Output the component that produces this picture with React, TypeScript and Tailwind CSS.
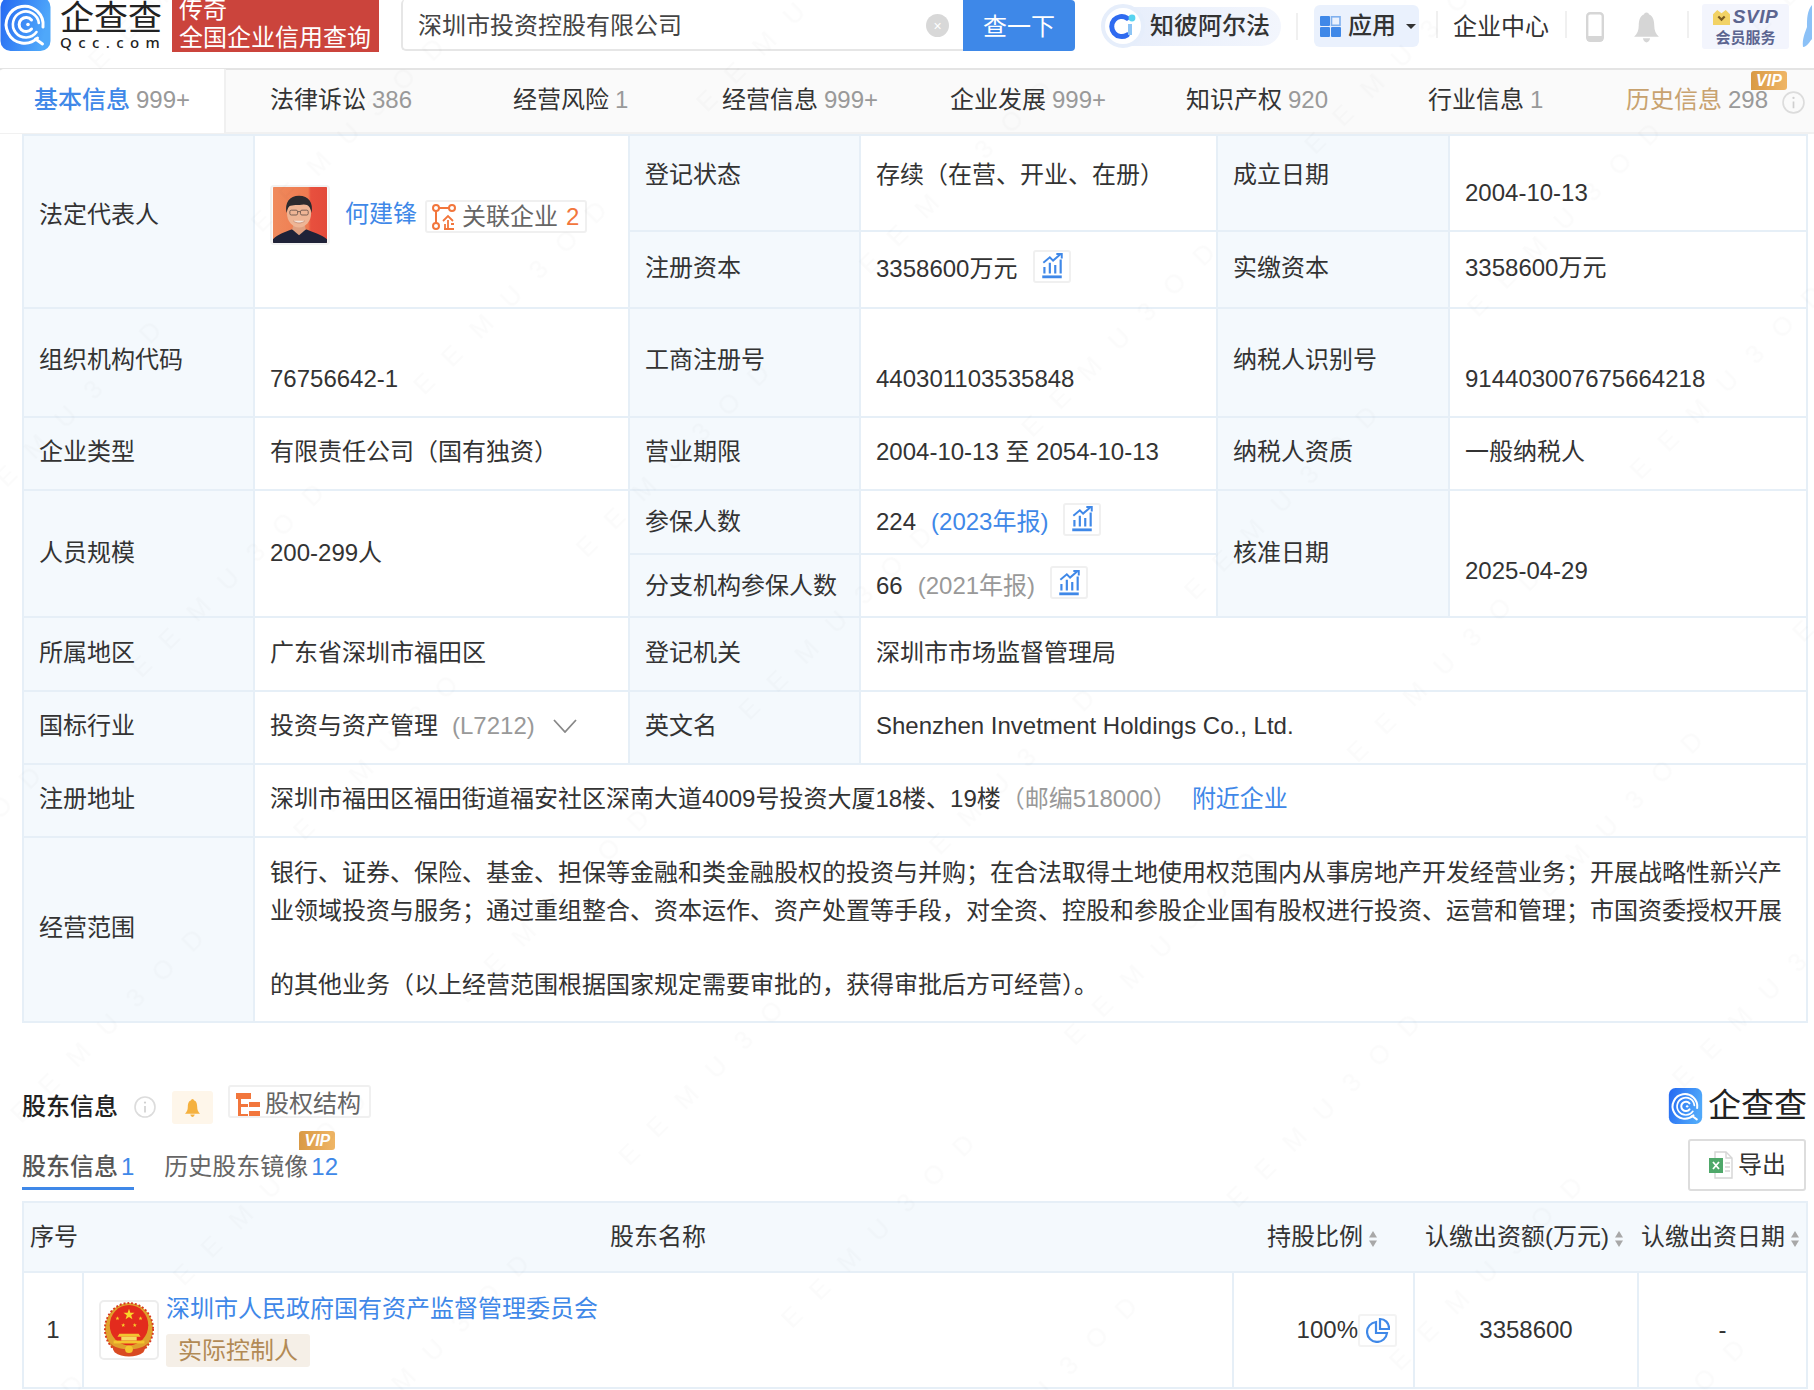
import React from "react";

const Logo = ({ className }: { className: string }) => (
  <svg viewBox="0 0 50 54" className={className}>
    <defs>
      <linearGradient id="lg" x1="0" y1="0" x2="1" y2="0.3">
        <stop offset="0" stopColor="#2468f2" />
        <stop offset="1" stopColor="#4fa8fa" />
      </linearGradient>
    </defs>
    <rect x="0" y="0" width="50" height="54" rx="10" fill="url(#lg)" />
    <path d="M37 41A18.5 18.5 0 1 1 42.5 30" fill="none" stroke="#fff" strokeWidth="3" strokeLinecap="round" />
    <path d="M35 42L42 47" fill="none" stroke="#fff" strokeWidth="3" strokeLinecap="round" />
    <path d="M36 35A13 13 0 1 1 38.3 26" fill="none" stroke="#fff" strokeWidth="2.6" strokeLinecap="round" />
    <path d="M31 23A7 7 0 1 0 31 32" fill="none" stroke="#fff" strokeWidth="3" strokeLinecap="round" />
    <circle cx="27.5" cy="27.5" r="1.8" fill="#fff" />
  </svg>
);

const Chart = ({ color = "#3f88e8" }: { color?: string }) => (
  <svg viewBox="0 0 24 24" className="w-[26px] h-[26px]" fill="none" stroke={color} strokeWidth="2">
    <path d="M3 22H21" strokeWidth="2.6" />
    <path d="M5 19V13M10 19V9M15 19V11M20 19V6" />
    <path d="M4 9L10 4L13 7L20 1" strokeWidth="1.8" />
    <path d="M16 1H21V5" strokeWidth="1.8" />
  </svg>
);

const ChartBtn = ({ className }: { className: string }) => (
  <span className={"inline-flex w-[38px] h-[33px] items-center justify-center rounded-[3px] border-2 border-[#f0f0f0] align-middle " + className}>
    <Chart />
  </span>
);

const Vip = ({ className }: { className: string }) => (
  <span className={"absolute w-[36px] h-[19px] flex items-center justify-center rounded-[3px] rounded-bl-none bg-gradient-to-r from-[#d99a45] to-[#efb565] text-white text-[16px] font-bold italic leading-none " + className}>
    VIP
  </span>
);

const Info = ({ className }: { className: string }) => (
  <svg viewBox="0 0 22 22" className={className} fill="none">
    <circle cx="11" cy="11" r="10" stroke="#dcdcdc" strokeWidth="1.6" />
    <circle cx="11" cy="6.6" r="1.1" fill="#cfcfcf" />
    <path d="M11 10V16.5" stroke="#cfcfcf" strokeWidth="1.6" />
  </svg>
);

const Bell = ({ className, color }: { className: string; color: string }) => (
  <svg viewBox="0 0 24 30" className={className} fill={color}>
    <circle cx="12" cy="3" r="2.4" />
    <path d="M12 2C18 2 19.5 8 19.5 13C19.5 18 21 21 24 24H0C3 21 4.5 18 4.5 13C4.5 8 6 2 12 2Z" />
    <path d="M8.5 25.5H15.5C15 28 13.5 29.5 12 29.5C10.5 29.5 9 28 8.5 25.5Z" />
  </svg>
);

const Sort = () => (
  <svg viewBox="0 0 8 16" className="w-[8px] h-[16px] ml-[6px] inline-block" fill="#a8a8a8">
    <path d="M4 0L8 6.5H0Z" />
    <path d="M4 16L8 9.5H0Z" />
  </svg>
);

const Avatar = () => (
  <span className="inline-flex w-[60px] h-[60px] rounded-[4px] border-2 border-[#f2f2f2] overflow-hidden shrink-0">
    <svg viewBox="0 0 56 58" className="w-full h-full">
      <defs>
        <linearGradient id="av" x1="0" y1="0" x2="1" y2="0">
          <stop offset="0" stopColor="#f08a5c" />
          <stop offset="0.65" stopColor="#ee7a50" />
          <stop offset="0.7" stopColor="#e8503e" />
          <stop offset="1" stopColor="#e34a3a" />
        </linearGradient>
      </defs>
      <rect width="56" height="58" fill="url(#av)" />
      <path d="M0 58V54C5 49 12 47 19 44H35C41 47 50 49 56 54V58Z" fill="#1f2238" />
      <path d="M20 44L27 50L34 44L32 36H22Z" fill="#dfa080" />
      <ellipse cx="27" cy="27" rx="12.5" ry="15" fill="#eeb595" />
      <path d="M14 27C12 16 17 9 27 9C37 9 42 16 40 27C39 21 37 18 32 18C26 19 20 18 17 20C15 22 15 24 14 27Z" fill="#2b2a2e" />
      <rect x="17.5" y="24" width="8" height="5" rx="1.5" fill="none" stroke="#5a4a44" strokeWidth="0.8" />
      <rect x="28.5" y="24" width="8" height="5" rx="1.5" fill="none" stroke="#5a4a44" strokeWidth="0.8" />
      <path d="M25.5 25.5H28.5" stroke="#5a4a44" strokeWidth="0.8" />
      <path d="M21 35C24 38 30 38 33 35" fill="#f5e6dc" stroke="#b0705a" strokeWidth="0.6" />
    </svg>
  </span>
);

const star = (cx: number, cy: number, r: number) => {
  const pts: string[] = [];
  for (let i = 0; i < 10; i++) {
    const rad = i % 2 === 0 ? r : r * 0.4;
    const a = (Math.PI / 5) * i - Math.PI / 2;
    pts.push(`${(cx + rad * Math.cos(a)).toFixed(2)},${(cy + rad * Math.sin(a)).toFixed(2)}`);
  }
  return pts.join(" ");
};

const Emblem = () => (
  <span className="inline-flex w-[60px] h-[60px] rounded-[5px] border-2 border-[#ededed] items-center justify-center shrink-0">
    <svg viewBox="0 0 54 58" className="w-[52px] h-[56px]">
      <ellipse cx="27" cy="28" rx="25" ry="27" fill="#e0a12c" />
      <ellipse cx="27" cy="28" rx="25" ry="27" fill="none" stroke="#d83a22" strokeWidth="2" strokeDasharray="2 2" />
      <ellipse cx="27" cy="24" rx="20" ry="21" fill="#e32b1d" />
      <polygon points={star(27, 13, 6)} fill="#f8d72a" />
      <polygon points={star(15, 17, 2.2)} fill="#f8d72a" />
      <polygon points={star(21, 24, 2.2)} fill="#f8d72a" />
      <polygon points={star(33, 24, 2.2)} fill="#f8d72a" />
      <polygon points={star(39, 17, 2.2)} fill="#f8d72a" />
      <path d="M17 33H37L39 36H15Z" fill="#f3c52f" />
      <rect x="19" y="36" width="16" height="4" fill="#f6d860" />
      <rect x="11" y="40" width="32" height="3" fill="#f3c52f" />
      <path d="M8 43C14 51 40 51 46 43L42 52C34 58 20 58 12 52Z" fill="#d94a22" />
      <circle cx="27" cy="49" r="4" fill="#f3c52f" />
    </svg>
  </span>
);

const Excel = () => (
  <svg viewBox="0 0 24 28" className="w-[24px] h-[28px]" fill="none">
    <path d="M6 1H17L23 7V27H6Z" fill="#fff" stroke="#d5d5d5" strokeWidth="1.4" />
    <path d="M17 1V7H23" stroke="#d5d5d5" strokeWidth="1.4" />
    <path d="M16 12H21M16 16H21M16 20H21" stroke="#d5d5d5" strokeWidth="1.4" />
    <rect x="0" y="7" width="14" height="15" fill="#4fa86a" />
    <path d="M4 11L10 18M10 11L4 18" stroke="#fff" strokeWidth="1.8" />
  </svg>
);

const Pie = () => (
  <span className="inline-flex w-[39px] h-[33px] items-center justify-center rounded-[3px] border-2 border-[#f3f3f3]">
    <svg viewBox="0 0 24 24" className="w-[24px] h-[26px]" fill="none" stroke="#3f88e8" strokeWidth="2.2">
      <path d="M10 4A10 10 0 1 0 21 15H10Z" />
      <path d="M14 1A9 9 0 0 1 23 10V11H14Z" />
    </svg>
  </span>
);

const Label = ({ children, rowSpan, className = "" }: { children: React.ReactNode; rowSpan?: number; className?: string }) => (
  <td rowSpan={rowSpan} className={"border-2 border-[#e6eff7] bg-[#f4f9fd] pl-[15px] pr-2 align-middle " + className}>
    {children}
  </td>
);

const Val = ({ children, rowSpan, colSpan, className = "" }: { children: React.ReactNode; rowSpan?: number; colSpan?: number; className?: string }) => (
  <td rowSpan={rowSpan} colSpan={colSpan} className={"border-2 border-[#e6eff7] bg-white pl-[15px] pr-2 align-middle " + className}>
    {children}
  </td>
);

const tabs = [
  { t: "基本信息", c: "999+", w: "w-[226px] pl-[34px] bg-white border-r-2 border-[#f0f0f0] rounded-tl-[4px]", active: true },
  { t: "法律诉讼", c: "386", w: "w-[242px] pl-[44px]" },
  { t: "经营风险", c: "1", w: "w-[209px] pl-[45px]" },
  { t: "经营信息", c: "999+", w: "w-[228px] pl-[45px]" },
  { t: "企业发展", c: "999+", w: "w-[236px] pl-[45px]" },
  { t: "知识产权", c: "920", w: "w-[242px] pl-[45px]" },
  { t: "行业信息", c: "1", w: "w-[198px] pl-[45px]" },
];

export default function App() {
  return (
    <div className="relative w-[1814px] h-[1390px] overflow-hidden bg-white font-['Liberation_Sans','Noto_Sans_CJK_SC',sans-serif] text-[24px] leading-[34px] text-[#333]">
      <header className="h-[70px] border-b-2 border-[#e4e4e4] flex items-start overflow-hidden">
        <Logo className="w-[51px] h-[54px] -mt-[3px] shrink-0" />
        <div className="ml-[9px] w-[104px] shrink-0 flex flex-col text-[#222]">
          <span className="text-[34px] leading-[33px] pt-[2px] whitespace-nowrap">企查查</span>
          <span className="text-[15px] leading-[14px] tracking-[6.4px] font-medium font-['Noto_Sans',sans-serif] whitespace-nowrap">Qcc.com</span>
        </div>
        <div className="ml-[8px] w-[207px] h-[52px] bg-[#cb443c] text-white pl-[7px] overflow-hidden shrink-0">
          <div className="-mt-[5px] leading-[29px]">传奇</div>
          <div className="leading-[28px] whitespace-nowrap">全国企业信用查询</div>
        </div>
        <div className="ml-[22px] w-[674px] h-[51px] flex shrink-0">
          <div className="flex-1 flex items-center rounded-l-[5px] border-2 border-t-0 border-r-0 border-[#e6e6e6] pl-[15px] pr-[14px] pt-[3px] -mt-[1px] h-[52px]">
            <span className="flex-1 whitespace-nowrap text-[#444]">深圳市投资控股有限公司</span>
            <span className="w-[23px] h-[23px] rounded-full bg-[#d8d8d8] text-white flex items-center justify-center text-[14px] leading-none">×</span>
          </div>
          <div className="w-[112px] bg-[#3e88e8] rounded-r-[4px] flex items-center justify-center pt-[2px] text-white">查一下</div>
        </div>
        <div className="ml-[26px] mt-[4px] flex items-center shrink-0">
          <div className="w-[44px] h-[44px] rounded-full bg-white border-[4px] border-[#e6eefb] flex items-center justify-center z-10">
            <svg viewBox="0 0 30 30" className="w-[30px] h-[30px]" fill="none">
              <path d="M19 7A10 10 0 1 0 19 24" stroke="#2f6bf0" strokeWidth="5" strokeLinecap="round" />
              <path d="M22 13V24" stroke="#8cc4f5" strokeWidth="4" />
              <circle cx="24" cy="7" r="3.4" fill="#57d3f0" />
            </svg>
          </div>
          <div className="-ml-[20px] h-[39px] w-[156px] pl-[25px] rounded-r-full bg-gradient-to-r from-[#e7eefb] to-[#f3f6fd] flex items-center font-medium whitespace-nowrap">知彼阿尔法</div>
        </div>
        <span className="ml-[15px] mt-[13px] w-[2px] h-[27px] bg-[#f0f0f0] shrink-0" />
        <div className="ml-[16px] mt-[5px] w-[105px] h-[42px] rounded-[6px] bg-[#eaf1fd] flex items-center pl-[6px] font-medium shrink-0">
          <svg viewBox="0 0 21 21" className="w-[21px] h-[21px]">
            <rect x="0" y="0" width="10" height="10" fill="#3f88e8" rx="1" />
            <rect x="11.5" y="0.8" width="8.5" height="8.5" fill="none" stroke="#7fb0ee" strokeWidth="1.6" />
            <rect x="0" y="11" width="10" height="10" fill="#3f88e8" rx="1" />
            <rect x="11" y="11" width="10" height="10" fill="#3f88e8" rx="1" />
          </svg>
          <span className="ml-[7px]">应用</span>
          <svg viewBox="0 0 10 5" className="ml-[10px] w-[10px] h-[5px]" fill="#333"><path d="M0 0H10L5 5Z" /></svg>
        </div>
        <span className="ml-[17px] mt-[11px] w-[2px] h-[27px] bg-[#f0f0f0] shrink-0" />
        <span className="ml-[15px] mt-[10px] whitespace-nowrap shrink-0">企业中心</span>
        <span className="ml-[16px] mt-[11px] w-[2px] h-[27px] bg-[#f0f0f0] shrink-0" />
        <svg viewBox="0 0 18 30" className="ml-[19px] mt-[12px] w-[18px] h-[30px] shrink-0" fill="none">
          <rect x="1.2" y="1.2" width="15.6" height="27.6" rx="3" stroke="#d6d6d6" strokeWidth="2.4" />
          <rect x="1" y="24" width="16" height="5" fill="#d6d6d6" />
        </svg>
        <Bell className="ml-[30px] mt-[12px] w-[25px] h-[31px] shrink-0" color="#d6d6d6" />
        <span className="ml-[28px] mt-[11px] w-[2px] h-[27px] bg-[#f0f0f0] shrink-0" />
        <div className="ml-[13px] mt-[4px] w-[87px] h-[45px] rounded-[3px] bg-[#f3f5fd] flex flex-col items-center justify-center text-[#5c6590] font-bold shrink-0">
          <div className="flex items-center h-[22px]">
            <svg viewBox="0 0 16 16" className="w-[17px] h-[17px] mr-[3px]">
              <path d="M0 5L4 1L8 4L12 1L16 5V15H0Z" fill="#f2d265" />
              <path d="M5 7L8 10L11 7" stroke="#7a5a20" strokeWidth="2" fill="none" />
            </svg>
            <span className="italic text-[19px] leading-[22px] tracking-[0.5px]">SVIP</span>
          </div>
          <span className="text-[15px] leading-[19px]">会员服务</span>
        </div>
        <svg viewBox="0 0 10 42" className="ml-[13px] mt-[5px] w-[10px] h-[42px] shrink-0" fill="#8cc1f7">
          <path d="M10 0C5 6 5 14 5 22C3 28 0 34 1 42C5 42 8 36 10 34Z" />
        </svg>
      </header>

      <nav className="relative h-[64px] bg-[#fafafa] border-b-2 border-[#f1f1f1] flex items-center">
        {tabs.map((x) => (
          <div key={x.t} className={"h-[64px] flex items-center pb-[2px] whitespace-nowrap shrink-0 " + x.w}>
            <span className={x.active ? "text-[#3f88e8] font-medium" : "text-[#333]"}>{x.t}</span>
            <span className="ml-[6px] text-[#999]">{x.c}</span>
          </div>
        ))}
        <div className="relative h-[64px] flex items-center pb-[2px] pl-[45px] whitespace-nowrap">
          <span className="text-[#c8a26f]">历史信息</span>
          <span className="ml-[6px] text-[#999]">298</span>
          <Vip className="left-[170px] top-[2px]" />
          <Info className="ml-[14px] w-[23px] h-[23px] mt-[5px]" />
        </div>
      </nav>

      <table className="ml-[22px] w-[1784px] table-fixed border-collapse">
        <colgroup>
          <col className="w-[231px]" />
          <col className="w-[375px]" />
          <col className="w-[231px]" />
          <col className="w-[357px]" />
          <col className="w-[232px]" />
          <col className="w-[358px]" />
        </colgroup>
        <tbody>
          <tr className="h-[96px]">
            <Label rowSpan={2} className="pb-[14px]">法定代表人</Label>
            <Val rowSpan={2} className="pb-[13px]">
              <div className="flex items-center -mt-[1px]">
                <Avatar />
                <span className="ml-[15px] -mt-[1px] text-[#3f88e8] whitespace-nowrap">何建锋</span>
                <span className="ml-[8px] w-[162px] h-[33px] overflow-hidden rounded-[3px] border-2 border-[#f0f0f0] flex items-center pl-[5px] whitespace-nowrap mt-[4px]">
                  <svg viewBox="0 0 24 26" className="w-[24px] h-[26px] shrink-0" fill="none" stroke="#f2763c" strokeWidth="2">
                    <circle cx="4" cy="4" r="3" />
                    <circle cx="20" cy="4" r="3" />
                    <circle cx="4" cy="22" r="3" />
                    <path d="M7 4H17M4 7V19" />
                    <path d="M11 17L16 12L21 17M16 16V25M12 25H22M13 20V25M19 20H22" strokeWidth="1.8" />
                  </svg>
                  <span className="ml-[6px] text-[#666]">关联企业</span>
                  <span className="ml-[8px] text-[#f2763c]">2</span>
                </span>
              </div>
            </Val>
            <Label className="pb-[16px]">登记状态</Label>
            <Val className="pb-[16px]">存续（在营、开业、在册）</Val>
            <Label className="pb-[16px]">成立日期</Label>
            <Val className="pt-[20px]">2004-10-13</Val>
          </tr>
          <tr className="h-[77px]">
            <Label className="pb-[3px]">注册资本</Label>
            <Val className="pb-[2px]">
              <span className="inline-flex items-center whitespace-nowrap">
                3358600万元
                <ChartBtn className="ml-[16px] -mt-[5px]" />
              </span>
            </Val>
            <Label className="pb-[3px]">实缴资本</Label>
            <Val className="pb-[3px]">3358600万元</Val>
          </tr>
          <tr className="h-[109px]">
            <Label className="pb-[5px]">组织机构代码</Label>
            <Val className="pt-[33px]">76756642-1</Val>
            <Label className="pb-[5px]">工商注册号</Label>
            <Val className="pt-[33px]">440301103535848</Val>
            <Label className="pb-[5px]">纳税人识别号</Label>
            <Val className="pt-[33px]">914403007675664218</Val>
          </tr>
          <tr className="h-[73px]">
            <Label className="pb-[4px]">企业类型</Label>
            <Val className="pb-[4px]">有限责任公司（国有独资）</Val>
            <Label className="pb-[4px]">营业期限</Label>
            <Val className="pb-[4px]">2004-10-13 至 2054-10-13</Val>
            <Label className="pb-[4px]">纳税人资质</Label>
            <Val className="pb-[4px]">一般纳税人</Val>
          </tr>
          <tr className="h-[64px]">
            <Label rowSpan={2} className="pb-[1px]">人员规模</Label>
            <Val rowSpan={2} className="pb-[1px]">200-299人</Val>
            <Label>参保人数</Label>
            <Val>
              <span className="inline-flex items-center whitespace-nowrap">
                224
                <span className="ml-[15px] text-[#3f88e8]">(2023年报)</span>
                <ChartBtn className="ml-[15px] -mt-[6px]" />
              </span>
            </Val>
            <Label rowSpan={2} className="pb-[1px]">核准日期</Label>
            <Val rowSpan={2} className="pt-[34px]">2025-04-29</Val>
          </tr>
          <tr className="h-[63px]">
            <Label>分支机构参保人数</Label>
            <Val>
              <span className="inline-flex items-center whitespace-nowrap">
                66
                <span className="ml-[15px] text-[#999]">(2021年报)</span>
                <ChartBtn className="ml-[15px] -mt-[6px]" />
              </span>
            </Val>
          </tr>
          <tr className="h-[74px]">
            <Label className="pb-[3px]">所属地区</Label>
            <Val className="pb-[3px]">广东省深圳市福田区</Val>
            <Label className="pb-[3px]">登记机关</Label>
            <Val colSpan={3} className="pb-[3px]">深圳市市场监督管理局</Val>
          </tr>
          <tr className="h-[73px]">
            <Label className="pb-[4px]">国标行业</Label>
            <Val className="pb-[4px]">
              <span className="flex items-center whitespace-nowrap">
                投资与资产管理
                <span className="ml-[14px] text-[#999]">(L7212)</span>
                <svg viewBox="0 0 24 14" className="ml-[18px] w-[24px] h-[14px]" fill="none" stroke="#888" strokeWidth="1.8"><path d="M1 1L12 13L23 1" /></svg>
              </span>
            </Val>
            <Label className="pb-[4px]">英文名</Label>
            <Val colSpan={3} className="pb-[4px]">Shenzhen Invetment Holdings Co., Ltd.</Val>
          </tr>
          <tr className="h-[73px]">
            <Label className="pb-[4px]">注册地址</Label>
            <Val colSpan={5} className="pb-[4px]">
              <span className="whitespace-nowrap">
                深圳市福田区福田街道福安社区深南大道4009号投资大厦18楼、19楼
                <span className="text-[#999]">（邮编518000）</span>
                <span className="ml-[15px] text-[#3f88e8]">附近企业</span>
              </span>
            </Val>
          </tr>
          <tr className="h-[185px]">
            <Label className="pb-[3px]">经营范围</Label>
            <Val colSpan={5} className="pb-[2px]">
              <div className="leading-[38px] whitespace-nowrap">银行、证券、保险、基金、担保等金融和类金融股权的投资与并购；在合法取得土地使用权范围内从事房地产开发经营业务；开展战略性新兴产</div>
              <div className="leading-[38px] whitespace-nowrap">业领域投资与服务；通过重组整合、资本运作、资产处置等手段，对全资、控股和参股企业国有股权进行投资、运营和管理；市国资委授权开展</div>
              <div className="mt-[36px] leading-[38px] whitespace-nowrap">的其他业务（以上经营范围根据国家规定需要审批的，获得审批后方可经营）。</div>
            </Val>
          </tr>
        </tbody>
      </table>

      <section className="relative mt-[62px] pl-[22px] pr-[7px] flex items-start h-[50px]">
        <span className="mt-[5px] font-medium text-[#222] whitespace-nowrap">股东信息</span>
        <Info className="ml-[16px] mt-[11px] w-[22px] h-[22px] shrink-0" />
        <span className="ml-[16px] mt-[6px] w-[41px] h-[33px] rounded-[3px] bg-[#fef6ea] flex items-center justify-center shrink-0">
          <Bell className="w-[15px] h-[20px]" color="#f5b13f" />
        </span>
        <span className="ml-[15px] w-[143px] h-[33px] overflow-hidden rounded-[3px] border-2 border-[#f0f0f0] flex items-center pl-[5px] pt-[5px] whitespace-nowrap text-[#666] shrink-0">
          <svg viewBox="0 0 26 26" className="w-[26px] h-[26px] shrink-0" fill="#f2763c">
            <rect x="1" y="2" width="15" height="6" />
            <rect x="3" y="8" width="3" height="18" />
            <rect x="3" y="23" width="10" height="3" />
            <rect x="3" y="13" width="10" height="3" />
            <rect x="14" y="11" width="11" height="5" />
            <rect x="14" y="20" width="11" height="6" />
          </svg>
          <span className="ml-[4px]">股权结构</span>
        </span>
        <div className="ml-auto mt-[3px] flex items-center">
          <Logo className="w-[35px] h-[36px]" />
          <span className="ml-[5px] text-[33px] leading-[36px] text-[#222] whitespace-nowrap">企查查</span>
        </div>
      </section>

      <div className="relative pl-[22px] pr-[8px] flex items-start h-[63px] -mt-[1px]">
        <div className="mt-[16px] h-[40px] border-b-[3px] border-[#3f88e8] whitespace-nowrap text-[#555] font-medium">
          股东信息<span className="ml-[3px] text-[#3f88e8]">1</span>
        </div>
        <div className="relative ml-[30px] mt-[16px] whitespace-nowrap text-[#666]">
          历史股东镜像<span className="ml-[3px] text-[#3f88e8]">12</span>
          <Vip className="left-[135px] -top-[19px]" />
        </div>
        <div className="ml-auto mt-[5px] w-[118px] h-[52px] rounded-[3px] border-2 border-[#ddd] flex items-center pl-[19px] text-[#333]">
          <Excel />
          <span className="ml-[5px] -mt-[1px]">导出</span>
        </div>
      </div>

      <table className="ml-[22px] mt-[4px] w-[1784px] table-fixed border-collapse">
        <colgroup>
          <col className="w-[60px]" />
          <col className="w-[1150px]" />
          <col className="w-[181px]" />
          <col className="w-[224px]" />
          <col className="w-[169px]" />
        </colgroup>
        <tbody>
          <tr className="h-[70px] bg-[#f4f9fd]">
            <td className="border-y-2 border-l-2 border-[#e6eff7] pl-[6px] whitespace-nowrap">序号</td>
            <td className="border-y-2 border-[#e6eff7] text-center">股东名称</td>
            <td className="border-y-2 border-[#e6eff7] pl-[34px] whitespace-nowrap">持股比例<Sort /></td>
            <td className="border-y-2 border-[#e6eff7] pl-[11px] whitespace-nowrap">认缴出资额(万元)<Sort /></td>
            <td className="border-y-2 border-r-2 border-[#e6eff7] pl-[3px] whitespace-nowrap">认缴出资日期<Sort /></td>
          </tr>
          <tr className="h-[116px]">
            <td className="border-2 border-[#e6eff7] text-center">1</td>
            <td className="border-2 border-[#e6eff7] pl-[15px]">
              <div className="flex items-center">
                <Emblem />
                <div className="ml-[7px] flex flex-col items-start -mt-[2px]">
                  <span className="text-[#3f88e8] whitespace-nowrap leading-[36px]">深圳市人民政府国有资产监督管理委员会</span>
                  <span className="mt-[7px] h-[33px] w-[144px] rounded-[3px] bg-[#f5efe7] text-[#b28a55] flex items-center justify-center whitespace-nowrap">实际控制人</span>
                </div>
              </div>
            </td>
            <td className="border-2 border-[#e6eff7] text-right pr-[16px]">
              <span className="inline-flex items-center whitespace-nowrap">100%<Pie /></span>
            </td>
            <td className="border-2 border-[#e6eff7] text-center">3358600</td>
            <td className="border-2 border-[#e6eff7] text-center">-</td>
          </tr>
        </tbody>
      </table>

      <svg className="pointer-events-none absolute inset-0 w-full h-full">
        <defs>
          <pattern id="wm" width="400" height="230" patternUnits="userSpaceOnUse" patternTransform="rotate(-45)">
            <text x="20" y="120" fontSize="26" letterSpacing="22" fill="#000" fillOpacity="0.016" fontFamily="Liberation Sans, sans-serif">EEMU3OD</text>
          </pattern>
        </defs>
        <rect width="100%" height="100%" fill="url(#wm)" />
      </svg>
    </div>
  );
}
